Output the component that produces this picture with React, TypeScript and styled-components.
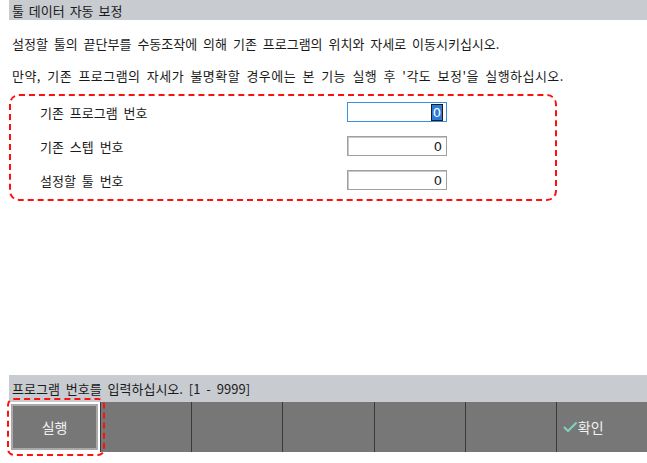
import styled, { createGlobalStyle } from "styled-components";

const GlobalStyle = createGlobalStyle`
  html, body {
    margin: 0;
    padding: 0;
    background: #ffffff;
  }
  body {
    font-family: "Noto Sans CJK KR", "Noto Sans", sans-serif;
    font-size: 13px;
    color: #1a1a1a;
    word-spacing: 3px;
  }
`;

const Screen = styled.div`
  width: 638px;
  height: 463px;
  margin-left: 9px;
  display: flex;
  flex-direction: column;
`;

const TitleBar = styled.div`
  height: 20px;
  background: #c8cbd0;
  display: flex;
  align-items: center;
  padding-left: 3px;
  font-size: 13px;
  word-spacing: 2px;
`;

const Message = styled.p<{ spread?: number }>`
  margin: 0;
  padding-left: 3px;
  height: 32px;
  line-height: 32px;
  white-space: nowrap;
  letter-spacing: ${({ spread }) => spread ?? 0}px;
`;

const Intro = styled.div`
  padding-top: 8px;
`;

const FormBox = styled.div`
  box-sizing: border-box;
  width: 548px;
  margin-top: 2px;
  border: 2px dashed #ff1010;
  border-radius: 10px;
  padding: 6px 0 9px 29px;
  display: flex;
  flex-direction: column;
  gap: 14px;
`;

const Row = styled.div`
  display: grid;
  grid-template-columns: 307px 100px;
  align-items: center;
  height: 20px;
`;

const Label = styled.span`
  white-space: nowrap;
`;

const Field = styled.div<{ focused?: boolean }>`
  box-sizing: border-box;
  width: 100px;
  height: 20px;
  border: 1px solid ${({ focused }) => (focused ? "#3a8ee6" : "#a0a0a0")};
  box-shadow: ${({ focused }) =>
    focused ? "none" : "inset 1px 1px 0 #c8c8c8"};
  background: #fff;
  display: flex;
  align-items: center;
  justify-content: flex-end;
  padding-right: 4px;
  font-family: "DejaVu Sans", sans-serif;
  font-size: 13px;
  color: #222;
`;

const Selected = styled.span`
  background: #2f7bd6;
  color: #fff;
  outline: 1px solid #1a1a1a;
  padding: 0 1px;
  line-height: 15px;
`;

const Spacer = styled.div`
  flex: 1;
`;

const StatusBar = styled.div`
  height: 27px;
  background: #c8cbd0;
  display: flex;
  align-items: center;
  padding-left: 3px;
  white-space: nowrap;
`;

const ButtonBar = styled.div`
  height: 50px;
  background: #777777;
  display: grid;
  grid-template-columns: repeat(7, 1fr);
  margin-bottom: 11px;
`;

const SoftKey = styled.div<{ active?: boolean; start?: boolean }>`
  position: relative;
  display: flex;
  align-items: center;
  justify-content: ${({ start }) => (start ? "flex-start" : "center")};
  padding-left: ${({ start }) => (start ? "6px" : "0")};
  gap: 1px;
  color: #f2f2f2;
  font-size: 14px;
  border-left: ${({ active }) => (active ? "none" : "1px solid #3a3a3a")};
  ${({ active }) =>
    active &&
    `
    background: #ffffff;
    padding: 2px;
    & > span.face {
      box-sizing: border-box;
      width: 100%;
      height: 100%;
      border: 2px solid #a9a9a9;
      background: #777777;
      display: flex;
      align-items: center;
      justify-content: center;
    }
    &::after {
      content: "";
      position: absolute;
      left: -2px;
      top: -4px;
      right: -5px;
      bottom: -4px;
      border: 2px dashed #ff1010;
      border-radius: 7px;
    }
  `}
  &:first-child {
    border-left: none;
  }
`;

const Check = () => (
  <svg width="14" height="12" viewBox="0 0 14 12">
    <path
      d="M1.5 6.5 L5 10 L13 2"
      fill="none"
      stroke="#7fd2bd"
      strokeWidth="2"
      strokeLinecap="round"
      strokeLinejoin="round"
    />
  </svg>
);

const fields = [
  { label: "기존 프로그램 번호", value: "0", focused: true },
  { label: "기존 스텝 번호", value: "0" },
  { label: "설정할 툴 번호", value: "0" },
];

export default function App() {
  return (
    <>
      <GlobalStyle />
      <Screen>
        <TitleBar>툴 데이터 자동 보정</TitleBar>
        <Intro>
          <Message>
            설정할 툴의 끝단부를 수동조작에 의해 기존 프로그램의 위치와 자세로
            이동시키십시오.
          </Message>
          <Message spread={0.45}>
            만약, 기존 프로그램의 자세가 불명확할 경우에는 본 기능 실행 후 '각도
            보정'을 실행하십시오.
          </Message>
        </Intro>
        <FormBox>
          {fields.map((f) => (
            <Row key={f.label}>
              <Label>{f.label}</Label>
              <Field focused={f.focused}>
                {f.focused ? <Selected>{f.value}</Selected> : f.value}
              </Field>
            </Row>
          ))}
        </FormBox>
        <Spacer />
        <StatusBar>프로그램 번호를 입력하십시오. [1 - 9999]</StatusBar>
        <ButtonBar>
          <SoftKey active>
            <span className="face">실행</span>
          </SoftKey>
          <SoftKey />
          <SoftKey />
          <SoftKey />
          <SoftKey />
          <SoftKey />
          <SoftKey start>
            <Check />
            확인
          </SoftKey>
        </ButtonBar>
      </Screen>
    </>
  );
}
